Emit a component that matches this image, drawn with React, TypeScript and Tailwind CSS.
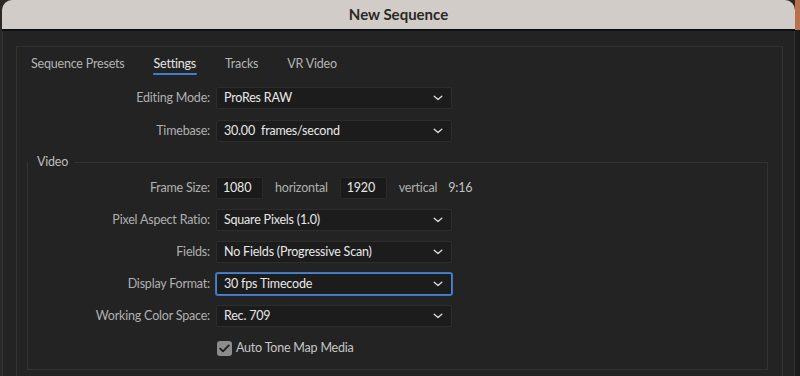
import React from "react";

function Chevron() {
  return (
    <svg width="10" height="6" viewBox="0 0 10 6" fill="none">
      <path d="M1.2 1.2 L5 4.6 L8.8 1.2" stroke="#d8d8d8" strokeWidth="1.4" strokeLinecap="round" strokeLinejoin="round" />
    </svg>
  );
}

function Dropdown({ value, focused = false }: { value: string; focused?: boolean }) {
  return (
    <div
      className={
        focused
          ? "flex h-[22px] w-[236px] items-center justify-between rounded-[2px] border border-[#4a84cc] bg-[#1c1c1c] pl-[7px] pr-[8px] ring-1 ring-[#3d76bd]"
          : "flex h-[22px] w-[236px] items-center justify-between rounded-[2px] border border-[#2d2d2d] bg-[#1c1c1c] pl-[7px] pr-[8px]"
      }
    >
      <span className="whitespace-pre text-[12.5px] leading-none tracking-[-0.2px] text-[#e8e8e8]">{value}</span>
      <Chevron />
    </div>
  );
}

function Row({ label, labelW, children }: { label: string; labelW: string; children: React.ReactNode }) {
  return (
    <div className="flex h-[22px] items-center gap-[6px]">
      <div className={`${labelW} shrink-0 text-right text-[12.5px] leading-none tracking-[-0.2px] text-[#b0b0b0]`}>{label}</div>
      {children}
    </div>
  );
}

function NumBox({ value }: { value: string }) {
  return (
    <div className="flex h-[22px] w-[47px] items-center rounded-[2px] border border-[#2a2a2a] bg-[#1a1a1a] pl-[6px] text-[12.5px] leading-none tracking-[-0.2px] text-[#e8e8e8]">
      {value}
    </div>
  );
}

export default function App() {
  return (
    <div className="flex h-[376px] w-[800px] overflow-hidden bg-[#2b2826] font-['Lato','Noto_Sans',sans-serif]">
      <div className="flex w-[795px] flex-col pl-[2px]">
        <div className="flex h-[29px] shrink-0 items-center justify-center rounded-t-[10px] bg-[#d1ccc8]">
          <span className="text-[15px] font-bold text-[#2a2826]">New Sequence</span>
        </div>
        <div className="h-[2px] shrink-0 bg-[#101010]" />
        <div className="flex flex-1 border-l border-r border-[#333333] bg-[#232323] pl-[13px] pt-[15px]">
          <div className="flex w-[767px] flex-col border-l border-r border-t border-[#333333]">
            <div className="mt-[3px] flex h-[28px] items-center gap-[29px] pl-[14px] text-[12.5px] tracking-[-0.2px]">
              <span className="text-[#b4b4b4]">Sequence Presets</span>
              <span className="relative text-[#e6e6e6]">
                Settings
                <span className="absolute -bottom-[2px] -left-[1px] -right-[1px] h-[2px] rounded-full bg-[#3f7ecf]" />
              </span>
              <span className="text-[#b4b4b4]">Tracks</span>
              <span className="text-[#b4b4b4]">VR Video</span>
            </div>
            <div className="mt-[9px] flex flex-col gap-[11px]">
              <Row label="Editing Mode:" labelW="w-[193px]">
                <Dropdown value="ProRes RAW" />
              </Row>
              <Row label="Timebase:" labelW="w-[193px]">
                <Dropdown value="30.00  frames/second" />
              </Row>
            </div>
            <fieldset className="ml-[10px] mt-[11px] w-[741px] border border-[#333333] pb-[13px]">
              <legend className="pl-[9px] pr-[6px] text-[12.5px] leading-[18px] tracking-[-0.2px] text-[#bdbdbd]">Video</legend>
              <div className="mt-[6px] flex flex-col gap-[10px]">
                <Row label="Frame Size:" labelW="w-[182px]">
                  <NumBox value="1080" />
                  <span className="ml-[6px] text-[12.5px] leading-none tracking-[-0.2px] text-[#b0b0b0]">horizontal</span>
                  <span className="ml-[6px]">
                    <NumBox value="1920" />
                  </span>
                  <span className="ml-[6px] text-[12.5px] leading-none tracking-[-0.2px] text-[#b0b0b0]">vertical</span>
                  <span className="ml-[5px] text-[12.5px] leading-none tracking-[-0.2px] text-[#c2c2c2]">9:16</span>
                </Row>
                <Row label="Pixel Aspect Ratio:" labelW="w-[182px]">
                  <Dropdown value="Square Pixels (1.0)" />
                </Row>
                <Row label="Fields:" labelW="w-[182px]">
                  <Dropdown value="No Fields (Progressive Scan)" />
                </Row>
                <Row label="Display Format:" labelW="w-[182px]">
                  <Dropdown value="30 fps Timecode" focused />
                </Row>
                <Row label="Working Color Space:" labelW="w-[182px]">
                  <Dropdown value="Rec. 709" />
                </Row>
              </div>
              <div className="ml-[189px] mt-[14px] flex items-center gap-[4px]">
                <div className="flex h-[15px] w-[15px] items-center justify-center rounded-[3px] bg-[#8c8c8c]">
                  <svg width="11" height="9" viewBox="0 0 11 9" fill="none">
                    <path d="M1.2 4.6 L4 7.4 L9.8 1.4" stroke="#1c1c1c" strokeWidth="1.8" strokeLinecap="round" strokeLinejoin="round" />
                  </svg>
                </div>
                <span className="text-[12.5px] leading-none tracking-[-0.2px] text-[#c6c6c6]">Auto Tone Map Media</span>
              </div>
            </fieldset>
          </div>
        </div>
      </div>
      <div className="flex w-[5px] flex-col">
        <div className="h-[30px] bg-[#b8714c]" />
        <div className="flex-1 bg-[#1b1b1b]" />
      </div>
    </div>
  );
}
